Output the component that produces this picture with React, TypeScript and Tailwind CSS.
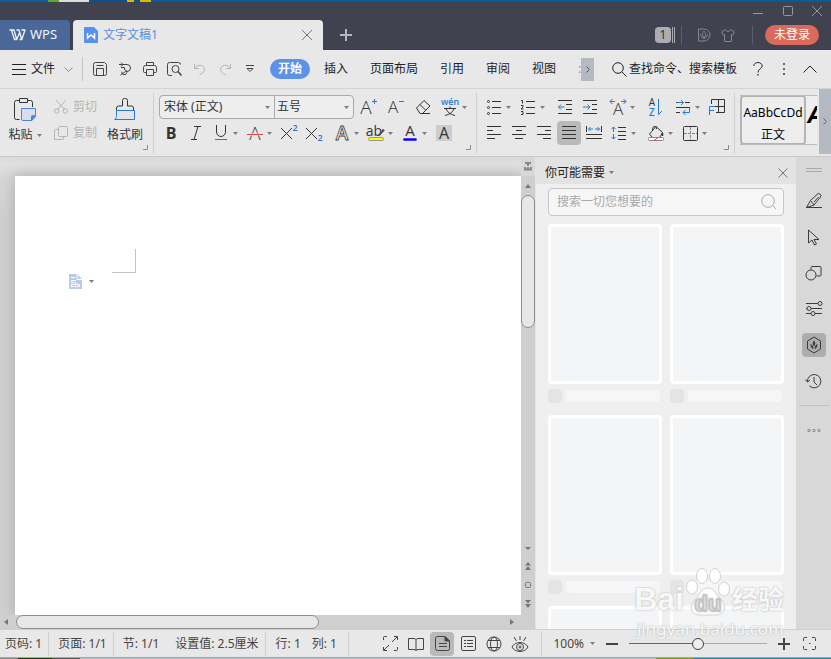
import type { ReactNode } from 'react';
import clsx from 'clsx';

interface GlyphProps {
  w?: number;
  h?: number;
  children: ReactNode;
  className?: string;
}

function Glyph({ w = 20, h = 20, children, className }: GlyphProps) {
  return (
    <svg
      width={w}
      height={h}
      viewBox={`0 0 ${w} ${h}`}
      fill="none"
      stroke="currentColor"
      className={clsx('shrink-0 overflow-visible', className)}
      aria-hidden="true"
    >
      {children}
    </svg>
  );
}

function Caret() {
  return (
    <Glyph w={5} h={3} className="text-[#7d7d7d]">
      <path d="M0 0h5L2.5 3z" fill="currentColor" stroke="none" />
    </Glyph>
  );
}

interface ToolProps {
  label: string;
  caret?: boolean;
  active?: boolean;
  children: ReactNode;
}

function Tool({ label, caret, active, children }: ToolProps) {
  return (
    <button
      aria-label={label}
      className={clsx('flex h-6 items-center rounded', caret ? 'w-[33px]' : 'w-6', active && 'bg-[#b9b9b9]')}
    >
      <span className="flex w-6 shrink-0 items-center justify-center">{children}</span>
      {caret && <Caret />}
    </button>
  );
}

function Cluster({ children }: { children: ReactNode }) {
  return <div className="flex gap-px">{children}</div>;
}

function Launcher() {
  return (
    <button aria-label="更多设置" className="absolute right-[5px] bottom-1">
      <Glyph w={5} h={5} className="text-[#8a8a8a]">
        <path d="M4.5 0v4.5H0" />
      </Glyph>
    </button>
  );
}

const letter = { fill: 'currentColor', stroke: 'none', textAnchor: 'middle' as const, fontFamily: 'Open Sans, Noto Sans, sans-serif' };
const blue = '#2a78d0';

function TitleBar() {
  return (
    <header className="flex h-12 bg-[#40434f]">
      <div className="flex items-end">
        <button className="mr-[3px] flex h-[30px] w-[70px] items-center gap-1 rounded-tr bg-[#4a6799] pl-[9px] text-[13px] text-[#f0f4fa]">
          <Glyph w={17} h={12}>
            <path d="M.5 1H5l2.700 9.500L11 2.800M3.500 1l-1 .2 3 9.300h2.200M7.500 1h2.500l2.800 9.500L16 1h-3.500M10.500 10.500h2.300" strokeWidth="1.3" strokeLinejoin="round" />
          </Glyph>
          WPS
        </button>
        <div className="flex h-[30px] w-[250px] items-center rounded-t bg-[#e8e8e8] pr-[10px] pl-[11px] text-[#5a8ee0]">
          <Glyph w={14} h={16}>
            <path d="M1 0h9l4 4v11a1 1 0 0 1-1 1H1a1 1 0 0 1-1-1V1a1 1 0 0 1 1-1z" fill="#5590f2" stroke="none" />
            <path d="M3.500 6v5l3.500-3 3.500 3V6" stroke="#fff" strokeWidth="1.5" />
          </Glyph>
          <span className="ml-[5px] flex-1 text-xs">文字文稿1</span>
          <button aria-label="关闭标签" className="text-[#777]">
            <Glyph w={12} h={12}><path d="M1 1l10 10M11 1L1 11" /></Glyph>
          </button>
        </div>
        <button aria-label="新建标签" className="flex h-[30px] w-[46px] items-center justify-center text-[#b4b6bc]">
          <Glyph w={12} h={12}><path d="M6 0v12M0 6h12" strokeWidth="2" /></Glyph>
        </button>
      </div>
      <div className="ml-auto flex flex-col items-end pr-3">
        <div className="-mr-3 flex h-[18px] items-center text-[#9799a1]">
          <button aria-label="最小化" className="flex w-[30px] justify-center">
            <Glyph w={10} h={10}><path d="M0 7.500h10" /></Glyph>
          </button>
          <button aria-label="最大化" className="flex w-[30px] justify-center">
            <Glyph w={10} h={10}><rect x=".5" y=".5" width="9" height="9" rx="1" /></Glyph>
          </button>
          <button aria-label="关闭" className="flex w-[28px] justify-center">
            <Glyph w={10} h={10}><path d="M0 0l10 10M10 0L0 10" /></Glyph>
          </button>
        </div>
        <div className="flex h-[30px] items-center text-[#85878f]">
          <button aria-label="打开的文档" className="flex gap-px">
            <span className="h-4 w-4 rounded-sm bg-[#abadb2] text-center text-xs leading-4 text-[#30323a]">1</span>
            <Glyph w={4} h={16} className="text-[#abadb2]"><path d="M.5 0v16M2.500 0v16" /></Glyph>
          </button>
          <span className="ml-[5px] h-[18px] w-px bg-[#5d606a]" />
          <button aria-label="稻壳" className="ml-[15px]">
            <Glyph w={14} h={14}>
              <path d="M1.500 1H7a6 6 0 0 1 0 12H1.500z" />
              <path d="M7 3c2 2 2 4 0 7.500C5 7 5 5 7 3zM3.500 6c0 2.500 1 4 3.500 4M10.500 6c0 2.500-1 4-3.500 4" />
            </Glyph>
          </button>
          <button aria-label="皮肤" className="ml-[10px]">
            <Glyph w={14} h={14}><path d="M4 1.500L.7 4l1.500 3 1.300-.5v7h7v-7l1.300.5 1.500-3L10 1.500C9 4 5 4 4 1.500z" strokeLinejoin="round" /></Glyph>
          </button>
          <span className="ml-[17px] h-[18px] w-px bg-[#5d606a]" />
          <button className="ml-3 h-5 rounded-full bg-[#db6a5c] px-[9px] text-xs text-white">未登录</button>
        </div>
      </div>
    </header>
  );
}

const menus = ['插入', '页面布局', '引用', '审阅', '视图'];

function MenuRow() {
  return (
    <nav className="flex h-[39px] items-center border-b border-[#d3d3d3] pl-3 text-xs text-[#222]">
      <button className="flex items-center gap-[5px]">
        <Glyph w={14} h={11}><path d="M0 .5h14M0 5.500h14M0 10.500h14" /></Glyph>
        文件
        <Glyph w={9} h={5} className="ml-1 text-[#8a8a8a]"><path d="M.5.5l4 4 4-4" /></Glyph>
      </button>
      <span className="mr-1 ml-[9px] h-6 w-px bg-[#c4c4c4]" />
      <div className="flex text-[#444] *:flex *:w-[25px] *:justify-center">
        <button aria-label="保存">
          <Glyph w={14} h={14}><path d="M2.500.5h9l2 2v9a2 2 0 0 1-2 2h-9a2 2 0 0 1-2-2v-9a2 2 0 0 1 2-2zM3.500 13.500v-7h7v7M3.500 3.500h7" /></Glyph>
        </button>
        <button aria-label="输出为PDF">
          <Glyph w={14} h={14}><path d="M1 2.500h8a3.500 3.500 0 0 1 0 7H7.500L2.500 13M3 5.500h3.500v2.200a2.500 2.500 0 1 1-2.700 2M3 .5l2 2-2 2" /></Glyph>
        </button>
        <button aria-label="打印">
          <Glyph w={14} h={14}><path d="M3.500 3.500v-3h7v3M3.500 10.500h-2a1 1 0 0 1-1-1v-4a2 2 0 0 1 2-2h9a2 2 0 0 1 2 2v4a1 1 0 0 1-1 1h-2M3.500 7.500h7v6h-7z" /></Glyph>
        </button>
        <button aria-label="打印预览">
          <Glyph w={15} h={14}><path d="M3.500 13.500h-1a2 2 0 0 1-2-2v-9a2 2 0 0 1 2-2h9a2 2 0 0 1 2 2M5 13.500H3" /><circle cx="8.500" cy="7" r="3.500" /><path d="M11 9.500l3.500 4" strokeWidth="1.5" /></Glyph>
        </button>
        <button aria-label="撤销" className="text-[#b5b5b5]">
          <Glyph w={14} h={14}><path d="M1.500 2v4.500H6M2 6c2-4 10-3.500 9.500 1.500-.3 3-3 4-5 5.500" /></Glyph>
        </button>
        <button aria-label="恢复" className="text-[#b5b5b5]">
          <Glyph w={14} h={14}><path d="M12.500 2v4.500H8M12 6C10 2 2 2.500 2.500 7.500c.3 3 3 4 5 5.500" /></Glyph>
        </button>
        <button aria-label="自定义快速访问" className="items-center">
          <Glyph w={8} h={8}><path d="M0 .5h8M1 3.500l3 3 3-3z" /></Glyph>
        </button>
      </div>
      <button className="ml-2 h-5 w-10 rounded-full bg-[#5c92e8] font-bold text-white">开始</button>
      <div className="ml-[14px] flex items-center gap-[22px]">
        {menus.map((name) => (
          <button key={name} className="whitespace-nowrap">{name}</button>
        ))}
        <span className="w-[3px] overflow-hidden text-[#999]">:</span>
      </div>
      <button aria-label="更多选项卡" className="flex h-[23px] w-[13px] items-center justify-center bg-[#b5b9c2] text-[#555]">
        <Glyph w={4} h={7}><path d="M.5.5l3 3-3 3" /></Glyph>
      </button>
      <div className="ml-auto flex items-center pr-2">
        <button className="mr-2 flex items-center gap-0.5 whitespace-nowrap">
          <Glyph w={15} h={15}><circle cx="6" cy="6" r="5.300" /><path d="M10 10l4.500 4.500" /></Glyph>
          查找命令、搜索模板
        </button>
        <div className="flex *:flex *:h-6 *:w-[26px] *:items-center *:justify-center">
          <button aria-label="帮助">
            <Glyph w={10} h={14}><path d="M.8 4C.8-.8 9.200-.5 9.200 4 9.200 6.500 5 6.800 5 10.500" /><path d="M5 12v1.500" strokeWidth="1.3" /></Glyph>
          </button>
          <button aria-label="更多">
            <Glyph w={2} h={12}><path d="M1 0v2M1 5v2M1 10v2" strokeWidth="2" stroke="#666" /></Glyph>
          </button>
          <button aria-label="收起功能区">
            <Glyph w={14} h={8}><path d="M.5 7.500L7 1l6.500 6.500" /></Glyph>
          </button>
        </div>
      </div>
    </nav>
  );
}

function ClipboardGroup() {
  return (
    <section className="relative flex w-[154px] shrink-0 border-r border-[#cfcfcf] pt-1 text-xs">
      <button className="ml-2 flex w-[34px] flex-col items-center gap-1.5">
        <Glyph w={24} h={24}>
          <path d="M6.500 3.500h-3a2 2 0 0 0-2 2v15a2 2 0 0 0 2 2h3M14.500 3.500h3a2 2 0 0 1 2 2V10M6.500 1.500h8v4h-8z" stroke="#333" />
          <path d="M8.500 11.500h14v8l-3.500 4h-9a1.500 1.500 0 0 1-1.500-1.500z" fill="#d8dfea" stroke="#4c84d6" />
          <path d="M22.500 18.500l-4 5v-4.500z" fill="#4c84d6" stroke="#4c84d6" />
        </Glyph>
        <span className="flex items-center gap-1 leading-4 whitespace-nowrap">粘贴<Caret /></span>
      </button>
      <div className="mt-0.5 ml-3 flex flex-col gap-[10px] text-[#b4b4b4]">
        <button className="flex h-4 items-center gap-[5px]">
          <Glyph w={14} h={14}><path d="M2 0l8.500 9.500M12 0L3.500 9.500" /><circle cx="2.700" cy="11" r="2.200" /><circle cx="11.300" cy="11" r="2.200" /></Glyph>
          剪切
        </button>
        <button className="flex h-4 items-center gap-[5px]">
          <Glyph w={14} h={16}><rect x="4.500" y="1.500" width="9" height="10" rx="1" /><path d="M4.500 4.500h-3a1 1 0 0 0-1 1v9h8a1 1 0 0 0 1-1v-2" /></Glyph>
          复制
        </button>
      </div>
      <button className="ml-[10px] flex flex-col items-center gap-1.5">
        <Glyph w={22} h={24}>
          <path d="M2.500 13v-2a2 2 0 0 1 2-2h4V3.500a2 2 0 0 1 2-2h1a2 2 0 0 1 2 2V9h4a2 2 0 0 1 2 2v2" stroke="#333" />
          <path d="M2.500 13.500h18v9H.5c1.500-1 2-2 2-4z" stroke={blue} fill="#dfe6ef" />
        </Glyph>
        <span className="leading-4 whitespace-nowrap">格式刷</span>
      </button>
      <Launcher />
    </section>
  );
}

function FontGroup() {
  return (
    <section className="relative flex w-[323px] shrink-0 flex-col gap-0.5 border-r border-[#cfcfcf] pt-0.5 pl-[5px]">
      <div className="flex items-center gap-[3px]">
        <div className="flex h-6 w-[195px] rounded border border-[#a9a9a9] bg-[#eee] text-xs">
          <label className="relative flex w-[115px] items-center border-r border-[#a9a9a9]">
            <select aria-label="字体" className="w-full appearance-none pl-1 outline-none">
              <option>宋体 (正文)</option>
            </select>
            <span className="pointer-events-none absolute right-1"><Caret /></span>
          </label>
          <label className="relative flex flex-1 items-center">
            <select aria-label="字号" className="w-full appearance-none pl-0.5 outline-none">
              <option>五号</option>
            </select>
            <span className="pointer-events-none absolute right-1"><Caret /></span>
          </label>
        </div>
        <Tool label="增大字号">
          <Glyph><text x="7" y="17" fontSize="19" fontWeight="300" {...letter}>A</text><path d="M13 4.500h5M15.500 2v5" stroke={blue} /></Glyph>
        </Tool>
        <Tool label="减小字号">
          <Glyph><text x="7" y="16" fontSize="17" fontWeight="300" {...letter}>A</text><path d="M13 4.500h5" stroke={blue} /></Glyph>
        </Tool>
        <Tool label="清除格式">
          <Glyph w={16} h={16}><path d="M1.500 9L9 1.500l6 5.500-7.500 7.500H5zM5 5.500l5.500 5.500M6 14.500h9" /></Glyph>
        </Tool>
        <Tool label="拼音指南" caret>
          <Glyph w={18} h={20}>
            <text x="9" y="8" fontSize="9" fontWeight="600" {...letter} fill={blue}>wén</text>
            <path d="M3 11.500h12M9 9.500v2M5 12c2 4 5 5.500 9 6.500M13 12c-2 4-5 5.500-9 6.500" />
          </Glyph>
        </Tool>
      </div>
      <div className="flex gap-1">
        <Cluster>
          <Tool label="加粗"><Glyph><text x="10" y="16" fontSize="16" fontWeight="700" {...letter}>B</text></Glyph></Tool>
          <Tool label="倾斜"><Glyph><path d="M8 3.500h7M5 16.500h6M12 3.500l-4 13" /></Glyph></Tool>
          <Tool label="下划线" caret><Glyph><path d="M5.500 2v7a4.500 4.500 0 0 0 9 0V2" /><path d="M4 16.500h12" stroke={blue} /></Glyph></Tool>
          <Tool label="删除线" caret><Glyph><text x="10" y="17" fontSize="19" fontWeight="300" {...letter}>A</text><path d="M2 11.500h16" stroke="#e8e8e8" strokeWidth="2" /><path d="M2 11.500h16" stroke="#d84a4a" /></Glyph></Tool>
          <Tool label="上标"><Glyph><path d="M2 5l11 11M13 5L2 16" /><text x="16" y="8" fontSize="9" fontWeight="600" {...letter} fill={blue}>2</text></Glyph></Tool>
          <Tool label="下标"><Glyph><path d="M2 5l11 11M13 5L2 16" /><text x="16" y="18" fontSize="9" fontWeight="600" {...letter} fill={blue}>2</text></Glyph></Tool>
        </Cluster>
        <Cluster>
          <Tool label="文字效果" caret><Glyph><text x="10" y="17" fontSize="19" fontWeight="600" {...letter} fill="#f4f4f4" stroke="#444" strokeWidth=".8">A</text></Glyph></Tool>
          <Tool label="突出显示" caret>
            <Glyph><text x="8" y="13" fontSize="14" {...letter}>ab</text><path d="M12 12l5-6 1.500 1.500-5 5z" fill="#555" stroke="#555" strokeWidth=".6" /><rect x="2.500" y="14.500" width="15" height="3" rx="1" fill="#ff0" stroke="#999" /></Glyph>
          </Tool>
          <Tool label="字体颜色" caret><Glyph><text x="10" y="13" fontSize="15" {...letter}>A</text><rect x="3" y="15" width="14" height="3" rx="1" fill="#00f" stroke="#fff" strokeWidth=".5" /></Glyph></Tool>
          <Tool label="字符底纹"><Glyph w={16} h={16} className="bg-[#cdcdcd]"><text x="8" y="14" fontSize="16" {...letter}>A</text></Glyph></Tool>
        </Cluster>
      </div>
      <Launcher />
    </section>
  );
}

function ParagraphGroup() {
  return (
    <section className="relative flex w-[258px] shrink-0 flex-col gap-0.5 border-r border-[#cfcfcf] pt-0.5 pl-[5px]">
      <div className="flex gap-1">
        <Cluster>
          <Tool label="项目符号" caret>
            <Glyph w={14} h={16}><path d="M5 2.500h9M5 8.500h9M5 14.500h9" /><circle cx="1.500" cy="2.500" r="1" /><circle cx="1.500" cy="8.500" r="1" /><circle cx="1.500" cy="14.500" r="1" /></Glyph>
          </Tool>
          <Tool label="编号" caret>
            <Glyph w={14} h={16}><path d="M5 2.500h9M5 8.500h9M5 14.500h9M0 1.500h1.500v3M0 6.500h2v1.500l-2 2h2.500M0 12.500h2v3H0" /></Glyph>
          </Tool>
        </Cluster>
        <Cluster>
          <Tool label="减少缩进量">
            <Glyph w={16} h={14}><path d="M1 .5h14M9 4.500h6M9 9.500h6M1 13.500h14" /><path d="M7.500 7h-6M4 4.500L1.500 7 4 9.500" stroke={blue} /></Glyph>
          </Tool>
          <Tool label="增加缩进量">
            <Glyph w={16} h={14}><path d="M1 .5h14M10 4.500h5M10 9.500h5M1 13.500h14" /><path d="M1 7h7M5.500 4.500L8 7 5.500 9.500" stroke={blue} /></Glyph>
          </Tool>
        </Cluster>
        <Cluster>
          <Tool label="中文版式" caret>
            <Glyph w={18} h={18}><text x="9" y="17" fontSize="17" fontWeight="300" {...letter}>A</text><path d="M1 3.500h5M12 3.500h5M3.500 1L1 3.500 3.500 6M14.500 1L17 3.500 14.500 6" stroke={blue} /></Glyph>
          </Tool>
        </Cluster>
        <Cluster>
          <Tool label="排序">
            <Glyph w={14} h={18}><text x="4" y="8" fontSize="10" {...letter}>A</text><text x="4" y="18" fontSize="10" fontWeight="600" {...letter} fill={blue}>Z</text><path d="M10.500 1v15.500l3.500-3.500" stroke={blue} /></Glyph>
          </Tool>
        </Cluster>
        <Cluster>
          <Tool label="制表位" caret>
            <Glyph w={16} h={16}><path d="M1 3.500h2M10 3.500h5M1 8.500h14M1 13.500h4" /><path d="M2 3.500h6M6 1l2.500 2.500L6 6M14.500 9v4.500H8M10.500 11L8 13.500l2.500 2.500" stroke={blue} /></Glyph>
          </Tool>
          <Tool label="插入框架">
            <Glyph w={18} h={18}><path d="M3.500 6V1.500h13v13H8M10.500 2v12M7 8.500h9" /><path d="M1.500 17V8.500H7M1.500 12.500H6" stroke={blue} /></Glyph>
          </Tool>
        </Cluster>
      </div>
      <div className="flex gap-1">
        <Cluster>
          <Tool label="左对齐"><Glyph w={14} h={14}><path d="M0 .5h14M0 4.500h6M0 8.500h14M0 12.500h8" /></Glyph></Tool>
          <Tool label="居中"><Glyph w={14} h={14}><path d="M0 .5h14M4 4.500h6M0 8.500h14M3 12.500h8" /></Glyph></Tool>
          <Tool label="右对齐"><Glyph w={14} h={14}><path d="M0 .5h14M8 4.500h6M0 8.500h14M6 12.500h8" /></Glyph></Tool>
          <Tool label="两端对齐" active><Glyph w={14} h={14}><path d="M0 .5h14M0 4.500h14M0 8.500h14M0 12.500h14" /></Glyph></Tool>
          <Tool label="分散对齐">
            <Glyph w={16} h={14}><path d="M.5 0v6M15.500 0v6M0 8.500h16M0 12.500h16" /><path d="M2.500 3h4.500M9 3h4.500M4.500 1l-2 2 2 2M11.500 1l2 2-2 2" stroke={blue} /></Glyph>
          </Tool>
          <Tool label="行距" caret>
            <Glyph w={16} h={14}><path d="M7 1.500h8M7 5.500h8M7 9.500h8M7 13.500h8" /><path d="M2.500 1v5M2.500 8v5M.5 3l2-2 2 2M.5 11l2 2 2-2" stroke={blue} /></Glyph>
          </Tool>
        </Cluster>
        <Cluster>
          <Tool label="底纹颜色" caret>
            <Glyph w={16} h={17}><path d="M4 12L1.500 9 8 1.500l6.500 6L12 12M4.500 5C4 1 8.500 0 8.500 4" /><path d="M14.500 8v3" stroke="#333" strokeWidth="1.5" /><rect x=".5" y="12.500" width="15" height="3" rx="1" fill="#fff" stroke="#888" /><path d="M6 15.500l4-3" stroke="#e04545" /></Glyph>
          </Tool>
          <Tool label="边框" caret>
            <Glyph w={15} h={15}><rect x=".5" y=".5" width="14" height="14" rx="1" /><path d="M7.500 1v13M1 7.500h13" stroke="#888" strokeDasharray="3 1" /></Glyph>
          </Tool>
        </Cluster>
      </div>
      <Launcher />
    </section>
  );
}

function Ribbon() {
  return (
    <div className="flex h-[68px] border-b border-[#c9c9c9] pb-0.5 text-[#333]">
      <div className="flex min-w-0 flex-1 overflow-hidden pt-1">
        <ClipboardGroup />
        <FontGroup />
        <ParagraphGroup />
        <div className="mt-0.5 ml-[5px] flex h-[50px] flex-1 overflow-hidden border-y border-[#bcbcbc] bg-[#eee]">
          <button className="-my-px h-[50px] w-[66px] shrink-0 rounded border-2 border-[#b4b4b4] pt-1 text-xs text-black">
            <span className="block leading-6">AaBbCcDd</span>
            <span className="block leading-5">正文</span>
          </button>
          <button aria-label="标题 1" className="ml-0.5 pb-3 text-2xl font-bold text-black italic">A</button>
        </div>
      </div>
      <button aria-label="展开功能区" className="ml-0.5 flex w-3 shrink-0 items-center justify-center bg-[#b5b9c2] text-[#666]">
        <Glyph w={4} h={7}><path d="M.5.5l3 3-3 3" /></Glyph>
      </button>
    </div>
  );
}

function DocumentArea() {
  return (
    <main className="flex min-w-0 flex-1 flex-col bg-[linear-gradient(#dadada,#e1e1e1_8px,#d8d8d8_19px,#d0d0d0_60px)]">
      <div className="flex min-h-0 flex-1 overflow-hidden pt-[19px] pl-[15px]">
        <div className="flex-1 bg-white pt-[73px] pl-[54px] shadow-[0_0_14px_#aaa]">
          <div className="ml-[43px] h-6 w-6 border-r border-b border-[#c3c3c3]" />
          <button aria-label="段落布局" className="mt-px flex items-center gap-[7px]">
            <Glyph w={13} h={15}>
              <path d="M0 0h8l5 5v10H0z" fill="#b8cbe9" stroke="none" />
              <path d="M8 0v5.500h5M2 3.500h4M2 6.500h5M2 8.500h3M2.500 10.500h8v2h-8zM6.500 8v2" stroke="#fff" />
            </Glyph>
            <Caret />
          </button>
        </div>
      </div>
      <div className="flex h-[14px] items-center justify-between bg-[#cfcfcf] px-1 text-[#777]">
        <Glyph w={4} h={6}><path d="M4 0v6L0 3z" fill="currentColor" stroke="none" /></Glyph>
        <div className="mr-auto ml-2 h-[14px] w-[59%] rounded-full border border-[#8e8e8e] bg-[#e7e7e7]" />
        <Glyph w={12} h={6}><path d="M5 0v6l4-3z" fill="currentColor" stroke="none" /></Glyph>
      </div>
    </main>
  );
}

function VerticalScrollbar() {
  return (
    <div className="flex w-[15px] shrink-0 flex-col items-center border-r border-[#e4e4e4] bg-[#cfcfcf] text-[#777]">
      <div className="flex h-[19px] w-full items-center justify-center bg-[#d8d8d8]">
        <Glyph w={8} h={9}><path d="M1 0h6v2H5v2H3V2H1zM0 6.500h8v2H0zM0 5h2v2H0zM3 5h2v2H3zM6 5h2v2H6z" fill="#888" stroke="none" /></Glyph>
      </div>
      <div className="flex h-[19px] items-center"><Glyph w={6} h={4}><path d="M0 4h6L3 0z" fill="currentColor" stroke="none" /></Glyph></div>
      <div className="h-[133px] w-[14px] rounded-full border border-[#8e8e8e] bg-[#e7e7e7]" />
      <div className="mt-auto mb-[21px] flex flex-col items-center gap-3">
        <Glyph w={6} h={3}><path d="M0 0h6L3 3z" fill="currentColor" stroke="none" /></Glyph>
        <Glyph w={6} h={8}><path d="M0 3.500h6L3 0zM0 8h6L3 4z" fill="currentColor" stroke="none" /></Glyph>
        <Glyph w={6} h={6}><rect x=".5" y=".5" width="5" height="5" rx="1" /></Glyph>
        <Glyph w={6} h={8}><path d="M0 0h6L3 3.500zM0 4h6L3 8z" fill="currentColor" stroke="none" /></Glyph>
      </div>
    </div>
  );
}

function Watermark() {
  return (
    <div className="pointer-events-none absolute right-3 bottom-[-12px] z-10 text-white/90 [text-shadow:0_0_1px_#bbb,0_0_2px_#bbb]" aria-hidden="true">
      <div className="flex h-[50px] items-end gap-px">
        <span className="text-[32px] leading-9 font-bold font-[Liberation_Sans]">Bai</span>
        <svg width="46" height="50" viewBox="0 0 46 50" stroke="#d2d2d2" fill="#fff" fillOpacity=".9">
          <ellipse cx="7" cy="20" rx="5.500" ry="7" />
          <ellipse cx="17" cy="9" rx="5.500" ry="7.500" />
          <ellipse cx="30" cy="9" rx="5.500" ry="7.500" />
          <ellipse cx="39" cy="22" rx="5.500" ry="7" />
          <path d="M23 21c7 0 8 7 14 13 5 6 2 14-6 14-4 0-12 0-16 0-9 0-11-8-6-14 6-6 7-13 14-13z" />
          <text x="23" y="44" fontSize="22" fontWeight="700" textAnchor="middle" fontFamily="Liberation Sans, sans-serif" fill="#fff" stroke="#c4c4c4">du</text>
        </svg>
        <span className="text-[26px] leading-9 font-bold">经验</span>
      </div>
      <div className="text-right text-[17px] leading-6">jingyan.baidu.com</div>
    </div>
  );
}

function TemplatePanel() {
  return (
    <aside className="relative flex w-[260px] shrink-0 flex-col bg-[#efefef]">
      <div className="flex h-[27px] shrink-0 items-center bg-[#e3e3e3] pt-1 pr-2 pl-[9px] text-xs text-[#222]">
        <button className="flex items-center gap-1">你可能需要<Caret /></button>
        <button aria-label="关闭面板" className="ml-auto text-[#777]"><Glyph w={10} h={10}><path d="M.5.5l9 9M9.500.5l-9 9" /></Glyph></button>
      </div>
      <div className="flex min-h-0 flex-1 flex-col overflow-hidden px-3 pt-1">
        <label className="flex h-7 shrink-0 items-center rounded border border-[#c8c8c8] bg-[#f6f6f6] px-2 text-[#aaa]">
          <input aria-label="搜索" placeholder="搜索一切您想要的" className="min-w-0 flex-1 text-xs outline-none placeholder:text-[#a9a9a9]" />
          <Glyph w={16} h={16} className="-mr-0.5"><circle cx="7" cy="7" r="6.300" /><path d="M11.500 11.500l3.500 3.500" /></Glyph>
        </label>
        <div className="mt-2 grid grid-cols-2 gap-x-2 gap-y-3">
          {[0, 1, 2, 3, 4, 5].map((card) => (
            <div key={card}>
              <div className="h-40 rounded-sm border-[3px] border-white bg-[#f4f5f7]" />
              <div className="mt-[5px] flex h-[14px] items-center gap-1 pr-0.5">
                <span className="h-[14px] w-[14px] rounded-sm bg-[#e4e4e4]" />
                <span className="h-3 flex-1 rounded-sm bg-[#f6f6f8]" />
              </div>
            </div>
          ))}
        </div>
      </div>
      <Watermark />
    </aside>
  );
}

function SideStrip() {
  return (
    <div className="flex w-[35px] shrink-0 flex-col items-center bg-[#d8d8d8] pt-[11px] text-[#3c3c3c]">
      <Glyph w={16} h={4} className="text-[#aaa]"><path d="M0 .5h16M0 3.500h16" /></Glyph>
      <div className="mt-[17px] flex flex-col gap-3 *:flex *:h-6 *:w-6 *:items-center *:justify-center *:rounded">
        <button aria-label="样式"><Glyph w={16} h={16}><path d="M.5 14.500l4-7 6.500-6a2 2 0 0 1 3.500 2.500L8 12zM4.500 7.500L8 12M8 9l4.500-5M0 14.500h16" /></Glyph></button>
        <button aria-label="选择"><Glyph w={15} h={17}><path d="M2.500 1v13l3.500-3 2.500 5 2-1-2.500-4.500H13z" strokeLinejoin="round" /></Glyph></button>
        <button aria-label="形状"><Glyph w={17} h={16}><path d="M6 4.500V2.500a1 1 0 0 1 1-1h8a1 1 0 0 1 1 1V10a1 1 0 0 1-1 1h-3.500" /><circle cx="6" cy="10" r="5" /></Glyph></button>
        <button aria-label="属性"><Glyph w={16} h={16}><path d="M0 2.500h12M0 7.500h1M5 7.500h11M0 12.500h5M9 12.500h7" /><circle cx="14" cy="2.500" r="2" /><circle cx="3" cy="7.500" r="2" /><circle cx="7" cy="12.500" r="2" /></Glyph></button>
        <button aria-label="稻壳资源" className="bg-[#adadad]">
          <Glyph w={16} h={18}>
            <path d="M8 1l6.500 4v8L8 17l-6.500-4V5z" />
            <path d="M8 4.500c1.700 2 1.700 4 0 6-1.700-2-1.700-4 0-6zM4.500 8c0 3 1 4.500 3 5 0-2.500-1-4-3-5zM11.500 8c0 3-1 4.500-3 5 0-2.500 1-4 3-5z" fill="currentColor" stroke="none" />
          </Glyph>
        </button>
        <button aria-label="历史版本"><Glyph w={17} h={16}><path d="M2.500 9a6.700 6.700 0 1 1 2 4M.5 6.500l2 2.500 2.500-2M9 4v5l3 3" /></Glyph></button>
      </div>
      <span className="my-3 h-px w-[30px] bg-[#c0c0c0]" />
      <button aria-label="更多工具" className="mt-2.5 text-[#888]">
        <Glyph w={14} h={5}><circle cx="2" cy="2.500" r="1.200" /><circle cx="7" cy="2.500" r="1.200" /><circle cx="12" cy="2.500" r="1.200" /></Glyph>
      </button>
    </div>
  );
}

function StatusBar() {
  return (
    <footer className="flex h-[29px] shrink-0 items-center border-y border-t-[#cfcfcf] border-b-[#a8a8a8] bg-[#e8e8e8] text-xs whitespace-nowrap text-[#444]">
      <span className="border-r border-[#cfcfcf] pr-1.5 pl-[5px] leading-6">页码: 1</span>
      <span className="border-r border-[#cfcfcf] pr-1.5 pl-[9px] leading-6">页面: 1/1</span>
      <span className="pl-[9px]">节: 1/1</span>
      <span className="border-r border-[#cfcfcf] pr-1.5 pl-4 leading-6">设置值: 2.5厘米</span>
      <span className="pl-[10px]">行: 1</span>
      <span className="border-r border-[#cfcfcf] px-[11px] leading-6">列: 1</span>
      <div className="ml-auto flex items-center gap-0.5">
        <Tool label="全屏显示"><Glyph w={15} h={15}><path d="M.5 4V1.500a1 1 0 0 1 1-1H4M11 .5h3.500V4M14.500 11v2.500a1 1 0 0 1-1 1H11M4 14.500H.5V11M14 1L9 6M1 14l5-5" /></Glyph></Tool>
        <Tool label="阅读版式"><Glyph w={16} h={14}><path d="M8 2v12M.5 1.500H6a2 2 0 0 1 2 1 2 2 0 0 1 2-1h5.500v11H10a2 2 0 0 0-2 1 2 2 0 0 0-2-1H.5z" /></Glyph></Tool>
        <Tool label="页面视图" active><Glyph w={15} h={15}><path d="M2.500.5H10L14.500 5v7.500a2 2 0 0 1-2 2h-10a2 2 0 0 1-2-2v-10a2 2 0 0 1 2-2zM4 7.500h8M4 10.500h8" /><path d="M10 .5V5h4.500z" fill="currentColor" /></Glyph></Tool>
        <Tool label="大纲"><Glyph w={15} h={15}><rect x=".5" y=".5" width="14" height="14" rx="1.500" /><path d="M3 4.500h2M6 4.500h6M3 7.500h2M6 7.500h6M3 10.500h2M6 10.500h6" /></Glyph></Tool>
        <Tool label="Web版式"><Glyph w={16} h={16}><circle cx="8" cy="8" r="7" /><ellipse cx="8" cy="8" rx="3.500" ry="7" /><path d="M2 4.500h12M2 11.500h12" /></Glyph></Tool>
        <Tool label="护眼模式"><Glyph w={18} h={18}><path d="M1 12c3-6 13-6 16 0-3 6-13 6-16 0zM9 1v4M3 2l2.500 4M15 2l-2.500 4" /><circle cx="9" cy="12" r="3.500" /><circle cx="9" cy="12" r="1" /></Glyph></Tool>
      </div>
      <span className="ml-[9px] h-6 w-px bg-[#cfcfcf]" />
      <button className="ml-[11px] flex items-center gap-1.5">100%<Caret /></button>
      <button aria-label="缩小" className="ml-[11px]"><Glyph w={12} h={12}><path d="M0 6h12" strokeWidth="2" /></Glyph></button>
      <input
        type="range"
        aria-label="显示比例"
        defaultValue={50}
        className="mx-[11px] h-3 w-[138px] appearance-none bg-[linear-gradient(90deg,#666_50%,#aaa_50%)] bg-[length:100%_1px] bg-center bg-no-repeat [&::-webkit-slider-thumb]:h-3 [&::-webkit-slider-thumb]:w-3 [&::-webkit-slider-thumb]:appearance-none [&::-webkit-slider-thumb]:rounded-full [&::-webkit-slider-thumb]:border [&::-webkit-slider-thumb]:border-[#444] [&::-webkit-slider-thumb]:bg-[#eee]"
      />
      <button aria-label="放大"><Glyph w={12} h={12}><path d="M0 6h12M6 0v12" strokeWidth="2" /></Glyph></button>
      <button aria-label="最佳显示比例" className="mr-[15px] ml-[13px]">
        <Glyph w={13} h={13}><path d="M.5 4V1.500a1 1 0 0 1 1-1H4M9 .5h2.500a1 1 0 0 1 1 1V4M12.500 9v2.500a1 1 0 0 1-1 1H9M4 12.500H1.500a1 1 0 0 1-1-1V9M6 6.500h1.500" /></Glyph>
      </button>
    </footer>
  );
}

export default function App() {
  return (
    <div className="flex h-screen flex-col overflow-hidden bg-[#e8e8e8] font-['Noto_Sans','Noto_Sans_CJK_SC',sans-serif]">
      {/* Desktop peeking out above the window */}
      <div className="h-0.5 shrink-0 bg-[linear-gradient(90deg,#0d5da5_48px,#5fa832_48px_59px,#ddd_59px_89px,#075293_89px_127px,#d8b800_127px_134px,#075293_134px_140px,#d8b800_140px_151px,#075a9e_151px)]" />
      <TitleBar />
      <MenuRow />
      <Ribbon />
      <div className="flex min-h-0 flex-1">
        <DocumentArea />
        <VerticalScrollbar />
        <TemplatePanel />
        <SideStrip />
      </div>
      <StatusBar />
      <div className="h-px shrink-0 bg-[linear-gradient(90deg,#888_18px,#1d3a10_18px_52px,#555_52px_80px,#b5bdc2_80px_656px,#7c9a1c_656px_694px,#2080a8_694px)]" />
    </div>
  );
}
